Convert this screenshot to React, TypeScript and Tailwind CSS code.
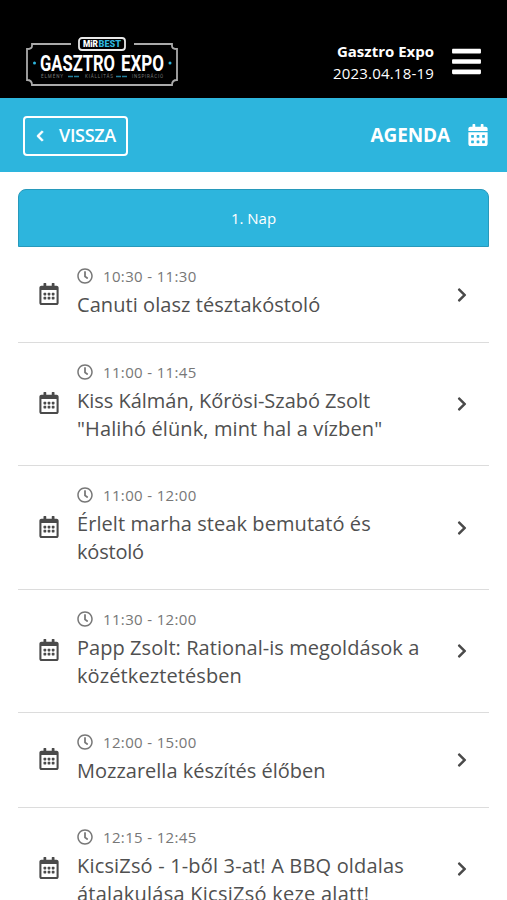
import {
  FaBars,
  FaCalendarAlt,
  FaChevronLeft,
  FaChevronRight,
  FaRegCalendarAlt,
  FaRegClock,
} from "react-icons/fa";

type Line = { text: string; className: string };
type Session = { time: string; lines: Line[]; height: string };

const sessions: Session[] = [
  {
    time: "10:30 - 11:30",
    lines: [{ text: "Canuti olasz tésztakóstoló", className: "tracking-[0.06px]" }],
    height: "h-24",
  },
  {
    time: "11:00 - 11:45",
    lines: [
      { text: "Kiss Kálmán, Kőrösi-Szabó Zsolt", className: "tracking-[-0.02px]" },
      { text: '"Halihó élünk, mint hal a vízben"', className: "tracking-[0.12px]" },
    ],
    height: "h-[123px]",
  },
  {
    time: "11:00 - 12:00",
    lines: [
      { text: "Érlelt marha steak bemutató és", className: "tracking-[0.07px]" },
      { text: "kóstoló", className: "tracking-[-0.2px]" },
    ],
    height: "h-[124px]",
  },
  {
    time: "11:30 - 12:00",
    lines: [
      { text: "Papp Zsolt: Rational-is megoldások a", className: "tracking-[0.06px]" },
      { text: "közétkeztetésben", className: "tracking-[0.1px]" },
    ],
    height: "h-[123px]",
  },
  {
    time: "12:00 - 15:00",
    lines: [{ text: "Mozzarella készítés élőben", className: "tracking-[0px]" }],
    height: "h-[95px]",
  },
  {
    time: "12:15 - 12:45",
    lines: [
      { text: "KicsiZsó - 1-ből 3-at! A BBQ oldalas", className: "tracking-[0.17px]" },
      { text: "átalakulása KicsiZsó keze alatt!", className: "tracking-[0.25px]" },
    ],
    height: "h-[123px]",
  },
];

function Logo() {
  return (
    <svg width="154" height="52" viewBox="0 0 154 52" className="shrink-0" fontFamily="Roboto, sans-serif">
      <path
        d="M46 8H7V10Q7 13 2 13V44Q7 44 7 49H147Q147 44 152 44V13Q147 13 147 10V8H109"
        fill="none"
        stroke="#aaa"
        strokeWidth="1.8"
      />
      <rect x="54" y="2" width="46" height="12" rx="3" fill="#000" stroke="#e8e8e8" strokeWidth="1.8" />
      <text x="58" y="11.3" fontSize="9" fontWeight="900" fill="#fff" textLength="15" lengthAdjust="spacingAndGlyphs">
        MiR
      </text>
      <text x="73.5" y="11.3" fontSize="9" fontWeight="900" fill="#2db5dd" textLength="22.5" lengthAdjust="spacingAndGlyphs">
        BEST
      </text>
      <text x="15" y="34.5" fontSize="22" fontWeight="700" fill="#fff" textLength="75" lengthAdjust="spacingAndGlyphs">
        GASZTRO
      </text>
      <text x="96" y="34.5" fontSize="22" fontWeight="700" fill="#fff" textLength="43" lengthAdjust="spacingAndGlyphs">
        EXPO
      </text>
      <circle cx="9.5" cy="27" r="1.5" fill="#2db5dd" />
      <circle cx="145" cy="27" r="1.5" fill="#2db5dd" />
      <g fontSize="4.5" fill="#777">
        <text x="16" y="42.3" textLength="22">ÉLMÉNY</text>
        <text x="60" y="42.3" textLength="28">KIÁLLÍTÁS</text>
        <text x="107" y="42.3" textLength="31">INSPIRÁCIÓ</text>
      </g>
      <path d="M43 40.5H54M91 40.5H103" stroke="#247f9c" strokeWidth="1.6" strokeDasharray="5 1" />
    </svg>
  );
}

function SessionRow({ session }: { session: Session }) {
  return (
    <li className={`flex items-center border-b border-[#dcdcdc] ${session.height}`}>
      <FaRegCalendarAlt className="mb-0.5 ml-5 size-[22px] shrink-0 text-[#4a4a4a]" />
      <div className="ml-[17px] h-full grow pt-[17px]">
        <div className="flex h-6 items-center text-[#777]">
          <FaRegClock className="size-4" />
          <span className="ml-2.5 text-[15px] tracking-[0.35px]">{session.time}</span>
        </div>
        <div className="mt-[3px] text-[20px] leading-7 whitespace-nowrap text-[#505050]">
          {session.lines.map((line) => (
            <p key={line.text}>
              <span className={line.className}>{line.text}</span>
            </p>
          ))}
        </div>
      </div>
      <FaChevronRight className="mr-[19px] size-4 shrink-0 text-[#4a4a4a]" />
    </li>
  );
}

export default function App() {
  return (
    <div className="h-[900px] overflow-hidden bg-white font-['Open_Sans','Noto_Sans',sans-serif]">
      <header className="flex h-[98px] items-start bg-black pt-9 pl-[25px] text-white">
        <Logo />
        <div className="mt-1 ml-auto flex flex-col items-end text-[15px] leading-[22px]">
          <span className="font-bold">Gasztro Expo</span>
          <span className="tracking-[0.2px]">2023.04.18-19</span>
        </div>
        <FaBars className="mt-[9px] mr-6 ml-4 size-[33px]" />
      </header>
      <div className="flex h-[74px] items-center bg-[#2db5dd] pt-px text-white">
        <button className="ml-[23px] flex h-10 w-[105px] items-center rounded-[4px] border-2 pl-[9px]">
          <FaChevronLeft className="size-3 stroke-current stroke-[30]" />
          <span className="ml-[13px] text-[18px] font-semibold tracking-[-0.3px]">VISSZA</span>
        </button>
        <h1 className="ml-auto text-[19px] font-bold tracking-[-0.1px]">AGENDA</h1>
        <FaCalendarAlt className="mr-[18px] mb-px ml-[17px] size-[22px]" />
      </div>
      <main className="mx-[18px] pt-[17px]">
        <div className="flex h-[58px] items-center justify-center rounded-t-lg border border-[#2799bb] bg-[#2db5dd] text-[15px] text-white">
          1. Nap
        </div>
        <ul>
          {sessions.map((session, i) => (
            <SessionRow key={i} session={session} />
          ))}
        </ul>
      </main>
    </div>
  );
}
